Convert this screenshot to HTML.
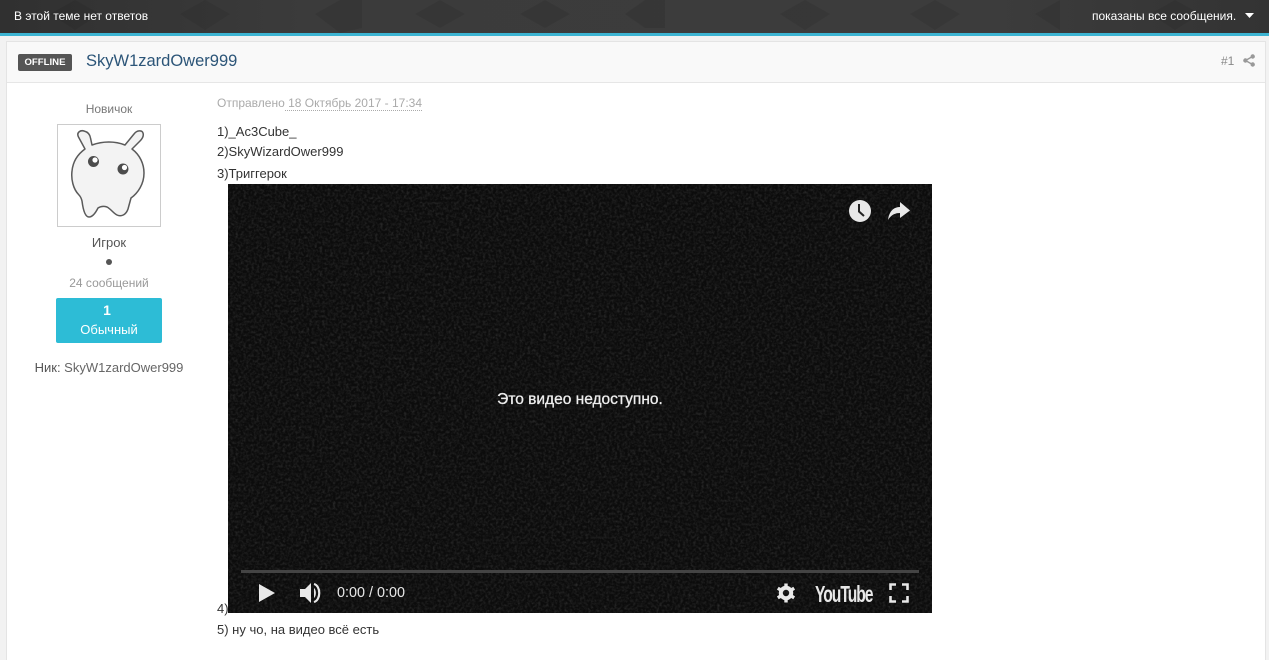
<!DOCTYPE html>
<html lang="ru">
<head>
<meta charset="utf-8">
<title>Тема</title>
<style>
html,body{margin:0;padding:0;}
body{width:1269px;height:660px;overflow:hidden;background:#f2f2f2;position:relative;font-family:"Liberation Sans",Arial,sans-serif;}
.a{position:absolute;white-space:nowrap;}
#bar{left:0;top:0;width:1269px;height:33px;background:linear-gradient(90deg,#303030 0,#3b3b3b 24%,#3c3c3c 78%,#333 100%);overflow:hidden;}
#line{left:0;top:33px;width:1269px;height:3px;background:#3cb4d2;}
#card{left:6px;top:41px;width:1260px;height:619px;background:#fff;border:1px solid #e4e4e4;border-bottom:0;box-sizing:border-box;}
#head{left:7px;top:42px;width:1258px;height:41px;background:#f9f9f9;border-bottom:1px solid #e6e6e6;box-sizing:border-box;}
#off{left:18px;top:54px;width:54px;height:17px;background:#555;border-radius:2px;color:#fff;font:bold 9.6px/17px "Liberation Sans",Arial,sans-serif;text-align:center;}
#name{left:86px;top:51px;font-size:16.5px;line-height:20px;color:#2c5578;}
.c{text-align:center;width:180px;left:19px;}
#vid{left:228px;top:184px;width:704px;height:429px;background:#111;overflow:hidden;}
.t{font-size:13px;color:#333;line-height:20px;left:217px;}
</style>
</head>
<body>
<div class="a" id="bar">
<svg width="1269" height="33" style="position:absolute;left:0;top:0">
<g fill="#000" opacity=".07">
<path d="M315 14 L340 0 L362 0 L362 28 L340 33Z"/>
<path d="M415 14 L440 0 L465 14 L440 28Z"/>
<path d="M520 14 L545 0 L570 14 L545 28Z"/>
<path d="M625 14 L645 0 L665 0 L665 28 L645 28Z"/>
<path d="M180 14 L205 0 L230 14 L205 30Z"/>
<path d="M50 14 L75 0 L100 14 L75 30Z"/>
<path d="M780 14 L805 0 L830 14 L805 30Z"/>
<path d="M910 14 L935 0 L960 14 L935 30Z"/>
<path d="M1035 14 L1060 0 L1060 30Z"/>
<path d="M1150 14 L1175 0 L1200 14 L1175 30Z"/>
</g>
</svg>
</div>
<div class="a" id="line"></div>
<div class="a" style="left:14px;top:8px;font-size:12px;line-height:16px;color:#fff">В этой теме нет ответов</div>
<div class="a" style="left:1092px;top:8px;font-size:12px;line-height:16px;color:#fff">показаны все сообщения.</div>
<svg class="a" style="left:1245px;top:13px" width="9" height="5"><path d="M0 0H9L4.5 5Z" fill="#fff"/></svg>

<div class="a" id="card"></div>
<div class="a" id="head"></div>
<div class="a" id="off">OFFLINE</div>
<div class="a" id="name">SkyW1zardOwer999</div>
<div class="a" style="left:1221px;top:53px;font-size:12px;line-height:16px;color:#888">#1</div>
<svg class="a" style="left:1243px;top:54px" width="12" height="13" viewBox="0 0 12 13">
<path d="M9.5 2.5 L2.5 6.5 L9.5 10.5" stroke="#999" stroke-width="1.4" fill="none"/>
<circle cx="9.7" cy="2.5" r="2.2" fill="#999"/><circle cx="2.4" cy="6.5" r="2.2" fill="#999"/><circle cx="9.7" cy="10.5" r="2.2" fill="#999"/>
</svg>

<div class="a c" style="top:101px;font-size:12px;line-height:16px;color:#777">Новичок</div>
<div class="a" style="left:57px;top:124px;width:104px;height:103px;border:1px solid #ccc;box-sizing:border-box;background:#fff"></div>
<svg class="a" style="left:57px;top:124px" width="104" height="103" viewBox="0 0 104 103">
<path d="M28 25 L21.5 13 C19 8 24 6 27 7 C31 8 33 11 33.5 14 L35 21 C46 17 58 17 68 21 L77 10 C80 6 85 6 86 9 C87 12 85 15 83 17 L75 25 C83 31 87 40 87 49 C87 60 81 69 74 74 L71 85 C69 91 64 93 60 91 C56 89 54 85 50 83 C47 82 44 82 41 84 C39 88 36 93 32 93 C28 93 26 85 25 77 C24 73 23 72 22 71 C16 65 14 55 15 47 C16 37 21 30 28 25Z" fill="#f3f3f3" stroke="#5a5a5a" stroke-width="1.5" stroke-linejoin="round"/>
<circle cx="36.5" cy="37.5" r="5.5" fill="#4c4c4c"/><circle cx="38" cy="36" r="2.6" fill="#fff"/>
<circle cx="66" cy="45" r="5.5" fill="#4c4c4c"/><circle cx="67.5" cy="43.5" r="2.6" fill="#fff"/>
</svg>
<div class="a c" style="top:235px;font-size:13px;line-height:16px;color:#555">Игрок</div>
<div class="a" style="left:106px;top:259px;width:6px;height:6px;border-radius:50%;background:#555"></div>
<div class="a c" style="top:275px;font-size:12px;line-height:16px;color:#999">24 сообщений</div>
<div class="a" style="left:56px;top:298px;width:106px;height:45px;background:#2dbcd6;border-radius:2px"></div>
<div class="a" style="left:54px;top:302px;width:106px;text-align:center;font-size:14px;font-weight:bold;line-height:17px;color:#fff">1</div>
<div class="a" style="left:56px;top:322px;width:106px;text-align:center;font-size:13px;line-height:16px;color:#fff">Обычный</div>
<div class="a c" style="top:360px;font-size:13px;line-height:16px;color:#666"><span style="color:#555">Ник:</span> SkyW1zardOwer999</div>

<div class="a" style="left:217px;top:95px;font-size:12px;line-height:16px;color:#aaa">Отправлено<span style="border-bottom:1px dotted #aaa"> 18 Октябрь 2017 - 17:34</span></div>
<div class="a t" style="top:122px">1)_Ac3Cube_</div>
<div class="a t" style="top:142px">2)SkyWizardOwer999</div>
<div class="a t" style="top:164px">3)Триггерок</div>
<div class="a t" style="top:599px">4)</div>
<div class="a t" style="top:620px">5) ну чо, на видео всё есть</div>

<div class="a" id="vid">
<svg width="704" height="429" style="position:absolute;left:0;top:0">
<filter id="n" x="0" y="0" width="100%" height="100%">
<feTurbulence type="fractalNoise" baseFrequency="0.38" numOctaves="2" seed="4"/>
<feColorMatrix values="0 0 0 0 1 0 0 0 0 1 0 0 0 0 1 0.55 0.55 0 0 -0.46"/>
</filter>
<rect width="704" height="429" fill="#0c0c0c"/>
<rect width="704" height="429" filter="url(#n)" opacity=".28"/>
</svg>
<div class="a" style="left:0;width:704px;text-align:center;top:205px;font-size:15.5px;line-height:19px;color:#eee;-webkit-text-stroke:.3px #eee;padding-top:1px">Это видео недоступно.</div>
<svg class="a" style="left:620px;top:15px" width="24" height="24" viewBox="0 0 24 24">
<circle cx="12" cy="12" r="11" fill="#e8e8e8"/>
<path d="M11 5 V12.5 L16 17" stroke="#222" stroke-width="2" fill="none"/>
</svg>
<svg class="a" style="left:659px;top:17px" width="24" height="20" viewBox="0 0 24 20">
<path d="M13 1 L23 9.5 L13 17 V12 C8 12 4 14 1 19 C2 11 6 6 13 6 Z" fill="#e8e8e8"/>
</svg>
<div class="a" style="left:13px;top:386px;width:678px;height:3px;background:#444"></div>
<svg class="a" style="left:31px;top:400px" width="17" height="18" viewBox="0 0 17 18"><path d="M0 0 L16 9 L0 18Z" fill="#e8e8e8"/></svg>
<svg class="a" style="left:71px;top:398px" width="23" height="22" viewBox="0 0 23 22">
<path d="M1 7 H6 L12 1 V21 L6 15 H1Z" fill="#e8e8e8"/>
<path d="M15 6 C17.5 8 17.5 14 15 16Z" fill="#e8e8e8"/>
<path d="M15 2 C22 4 22 18 15 20" stroke="#e8e8e8" stroke-width="2.2" fill="none"/>
</svg>
<div class="a" style="left:109px;top:400px;font-size:14.4px;line-height:18px;color:#e8e8e8">0:00 / 0:00</div>
<svg class="a" style="left:548px;top:399px" width="20" height="20" viewBox="0 0 20 20">
<circle cx="10" cy="10" r="5.2" fill="none" stroke="#e8e8e8" stroke-width="4"/>
<g stroke="#e8e8e8" stroke-width="3.4">
<path d="M10 0.5V4"/><path d="M10 16V19.5"/><path d="M1.8 5.2L4.8 7"/><path d="M15.2 13L18.2 14.8"/><path d="M1.8 14.8L4.8 13"/><path d="M15.2 7L18.2 5.2"/>
</g>
</svg>
<div class="a" style="left:587px;top:397px;font-size:23px;line-height:26px;font-weight:bold;color:#e8e8e8;letter-spacing:-1.5px;transform:scaleX(.68);transform-origin:left">YouTube</div>
<svg class="a" style="left:661px;top:399px" width="20" height="20" viewBox="0 0 20 20">
<path d="M1.5 7V1.5H7M13 1.5H18.5V7M18.5 13V18.5H13M7 18.5H1.5V13" stroke="#e8e8e8" stroke-width="2.6" fill="none"/>
</svg>
</div>
</body>
</html>
